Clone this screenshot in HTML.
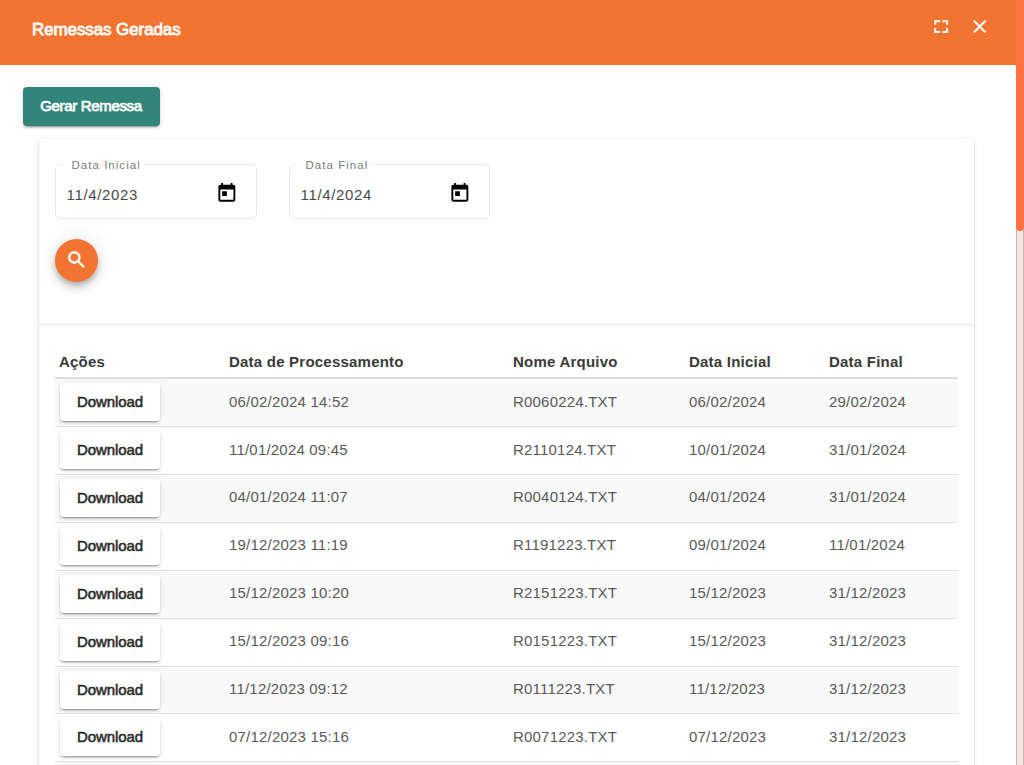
<!DOCTYPE html>
<html lang="pt-BR">
<head>
<meta charset="utf-8">
<title>Remessas Geradas</title>
<style>
  * { box-sizing: border-box; margin: 0; padding: 0; }
  html, body { width: 1024px; height: 765px; overflow: hidden; background: #fff; }
  body { font-family: "Liberation Sans", sans-serif; position: relative; color: #333; }

  /* header bar */
  .bar { position: absolute; left: 0; top: 0; width: 1016px; height: 65px; background: #f27430; }
  .bar .title { position: absolute; left: 32px; top: 19.3px; font-size: 17px; line-height: 22px; font-weight: 400; -webkit-text-stroke: .8px #fff; color: #fff; white-space: nowrap; letter-spacing: -.1px; }
  .bar svg { position: absolute; }

  /* scrollbar */
  .sb-track { position: absolute; left: 1016px; top: 0; width: 8px; height: 765px; background: #e9e9e9; border-left: 1px solid #eba997; border-right: 1px solid #eba997; }
  .sb-thumb { position: absolute; left: 1016px; top: -10px; width: 8px; height: 241px; background: #ff7043; border-radius: 4px; }

  /* green button */
  .btn-gerar { position: absolute; left: 23px; top: 87px; width: 137px; height: 39px; border-radius: 4px; background: #328679; color: #fff; font-weight: 400; -webkit-text-stroke: .75px #fff; letter-spacing: -.33px; font-size: 15px; line-height: 37px; text-indent: -1px; text-align: center; white-space: nowrap;
    box-shadow: 0 3px 1px -2px rgba(0,0,0,.2), 0 2px 2px 0 rgba(0,0,0,.14), 0 1px 5px 0 rgba(0,0,0,.12); }

  /* card */
  .card { position: absolute; left: 39px; top: 139px; width: 935px; height: 700px; background: #fff; border-radius: 4px;
    box-shadow: 0 3px 1px -2px rgba(0,0,0,.2), 0 2px 2px 0 rgba(0,0,0,.14), 0 1px 5px 0 rgba(0,0,0,.12); }
  .divider { position: absolute; left: 39px; top: 324px; width: 935px; height: 2px; background: linear-gradient(#ececec 50%, #f7f7f7 50%); }

  /* date fields */
  .field { position: absolute; top: 164px; width: 202px; height: 55px; border: 1px solid #e8e8e8; border-radius: 5px; }
  .field .lbl { position: absolute; left: 5.5px; top: -7px; padding: 0 2px 0 10px; background: #fff; font-size: 11.5px; line-height: 14px; letter-spacing: 1.03px; color: #7d7d7d; white-space: nowrap; }
  .field .val { position: absolute; left: 10.6px; top: 20px; font-size: 15px; line-height: 20px; color: #4a4a4a; letter-spacing: .65px; white-space: nowrap; }
  .field svg { position: absolute; right: 17px; top: 16px; width: 24px; height: 24px; }

  /* search fab */
  .fab { position: absolute; left: 55px; top: 239px; width: 43px; height: 43px; border-radius: 50%; background: #f27430;
    box-shadow: 0 3px 5px -1px rgba(0,0,0,.2), 0 6px 10px 0 rgba(0,0,0,.14), 0 1px 18px 0 rgba(0,0,0,.12); }
  .fab svg { position: absolute; left: 10px; top: 9px; width: 24px; height: 24px; }

  /* table */
  .thead { z-index: 3; position: absolute; left: 55px; top: 345px; width: 903px; height: 34px; border-bottom: 2px solid #ddd; }
  .thead span { position: absolute; top: 6.5px; font-weight: 700; font-size: 15px; line-height: 20px; color: #3a3a3a; letter-spacing: .22px; white-space: nowrap; }
  .row { position: absolute; left: 55px; width: 903px; height: 49px; border-top: 1px solid #e1e1e1; background: #fff; }
  .row.odd { background: #f9f9f9; }
  .row span { position: absolute; top: 12.5px; font-size: 15px; line-height: 20px; color: #5a5a5a; letter-spacing: .2px; white-space: nowrap; }
  .c2 { left: 174px; } .c3 { left: 458px; } .c4 { left: 634px; } .c5 { left: 774px; }
  .dl { position: absolute; left: 5px; top: 4px; width: 100px; height: 38px; border-radius: 4px; background: #fff; color: #2b2b2b; font-weight: 400; -webkit-text-stroke: .55px #2b2b2b; letter-spacing: -.1px; font-size: 15px; line-height: 38.8px; text-align: center;
    box-shadow: 0 3px 1px -2px rgba(0,0,0,.2), 0 2px 2px 0 rgba(0,0,0,.14), 0 1px 5px 0 rgba(0,0,0,.12); }
</style>
</head>
<body>

<div class="card"></div>
<div class="divider"></div>

<div class="bar">
  <div class="title">Remessas Geradas</div>
  <!-- fullscreen -->
  <svg style="left:930px;top:16px;width:24px;height:24px" viewBox="0 0 24 24"><path fill="#fff" d="M4.2 4.2h5.8v2H6.2v2.6h-2zM18.1 4.2h-5.7v2h3.7v2.6h2zM4.2 17.05h5.8v-2H6.2v-3h-2zM18.1 17.05h-5.7v-2h3.7v-3h2z"/></svg>
  <!-- close -->
  <svg style="left:968px;top:15px;width:24px;height:24px" viewBox="0 0 24 24"><path transform="translate(.78 .68) scale(.91)" fill="#fff" stroke="#fff" stroke-width=".35" d="M19 6.41L17.59 5 12 10.59 6.41 5 5 6.41 10.59 12 5 17.59 6.41 19 12 13.41 17.59 19 19 17.59 13.41 12z"/></svg>
</div>

<div class="sb-track"></div>
<div class="sb-thumb"></div>

<div class="btn-gerar">Gerar Remessa</div>

<div class="field" style="left:55px">
  <div class="lbl">Data Inicial</div>
  <div class="val">11/4/2023</div>
  <svg viewBox="0 0 24 24"><path transform="translate(.57 .95) scale(.94)" fill="#000" d="M19 3h-1V1h-2v2H8V1H6v2H5c-1.11 0-1.99.9-1.99 2L3 19c0 1.1.89 2 2 2h14c1.1 0 2-.9 2-2V5c0-1.1-.9-2-2-2zm0 16H5V8h14v11zM7 10h5v5H7z"/></svg>
</div>
<div class="field" style="left:289px;width:201.4px">
  <div class="lbl">Data Final</div>
  <div class="val">11/4/2024</div>
  <svg viewBox="0 0 24 24"><path transform="translate(.57 .95) scale(.94)" fill="#000" d="M19 3h-1V1h-2v2H8V1H6v2H5c-1.11 0-1.99.9-1.99 2L3 19c0 1.1.89 2 2 2h14c1.1 0 2-.9 2-2V5c0-1.1-.9-2-2-2zm0 16H5V8h14v11zM7 10h5v5H7z"/></svg>
</div>

<div class="fab">
  <svg viewBox="0 0 24 24"><path transform="translate(.47 .62) scale(.93)" fill="#fff" stroke="#fff" stroke-width=".55" stroke-linejoin="round" d="M15.5 14h-.79l-.28-.27C15.41 12.59 16 11.11 16 9.500 16 5.910 13.090 3 9.500 3S3 5.910 3 9.500 5.910 16 9.500 16c1.610 0 3.090-.59 4.230-1.570l.27.28v.79l5 4.990L20.490 19l-4.990-5zm-6 0C7.010 14 5 11.990 5 9.500S7.010 5 9.500 5 14 7.010 14 9.500 11.990 14 9.500 14z"/></svg>
</div>

<div class="thead">
  <span style="left:4px">Ações</span>
  <span class="c2">Data de Processamento</span>
  <span class="c3">Nome Arquivo</span>
  <span class="c4">Data Inicial</span>
  <span class="c5">Data Final</span>
</div>

<div class="row odd" style="top:378.15px"><div class="dl">Download</div><span class="c2">06/02/2024 14:52</span><span class="c3">R0060224.TXT</span><span class="c4">06/02/2024</span><span class="c5">29/02/2024</span></div>
<div class="row" style="top:426.05px"><div class="dl">Download</div><span class="c2">11/01/2024 09:45</span><span class="c3">R2110124.TXT</span><span class="c4">10/01/2024</span><span class="c5">31/01/2024</span></div>
<div class="row odd" style="top:473.95px"><div class="dl">Download</div><span class="c2">04/01/2024 11:07</span><span class="c3">R0040124.TXT</span><span class="c4">04/01/2024</span><span class="c5">31/01/2024</span></div>
<div class="row" style="top:521.85px"><div class="dl">Download</div><span class="c2">19/12/2023 11:19</span><span class="c3">R1191223.TXT</span><span class="c4">09/01/2024</span><span class="c5">11/01/2024</span></div>
<div class="row odd" style="top:569.75px"><div class="dl">Download</div><span class="c2">15/12/2023 10:20</span><span class="c3">R2151223.TXT</span><span class="c4">15/12/2023</span><span class="c5">31/12/2023</span></div>
<div class="row" style="top:617.65px"><div class="dl">Download</div><span class="c2">15/12/2023 09:16</span><span class="c3">R0151223.TXT</span><span class="c4">15/12/2023</span><span class="c5">31/12/2023</span></div>
<div class="row odd" style="top:665.55px"><div class="dl">Download</div><span class="c2">11/12/2023 09:12</span><span class="c3">R0111223.TXT</span><span class="c4">11/12/2023</span><span class="c5">31/12/2023</span></div>
<div class="row" style="top:713.45px"><div class="dl">Download</div><span class="c2">07/12/2023 15:16</span><span class="c3">R0071223.TXT</span><span class="c4">07/12/2023</span><span class="c5">31/12/2023</span></div>
<div class="row odd" style="top:761.35px"><div class="dl">Download</div><span class="c2">05/12/2023 10:02</span><span class="c3">R0051223.TXT</span><span class="c4">05/12/2023</span><span class="c5">31/12/2023</span></div>

</body>
</html>
